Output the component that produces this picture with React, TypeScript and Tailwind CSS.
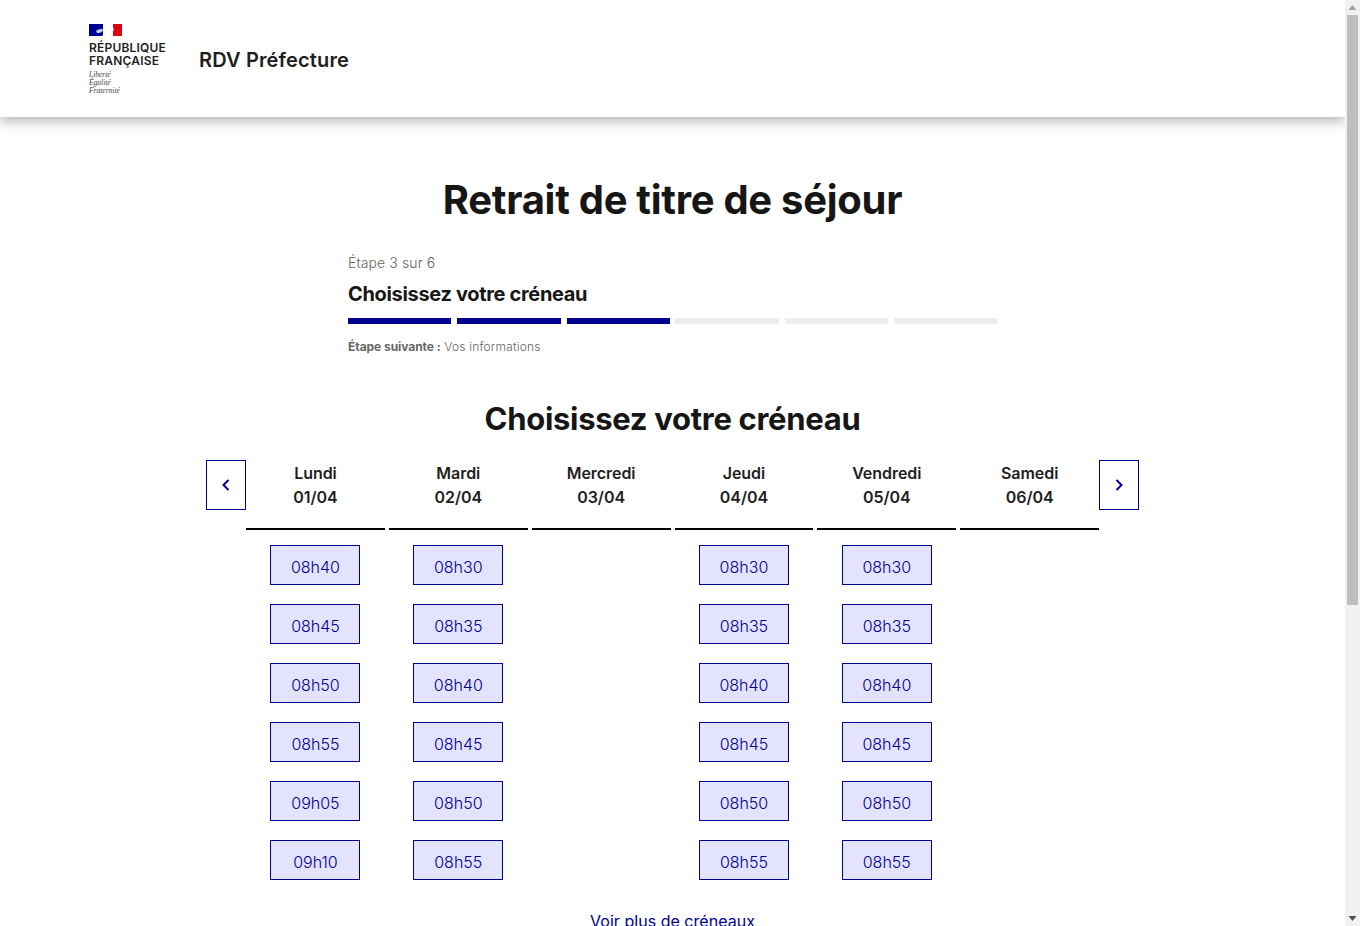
import React from "react";

const font = { fontFamily: '"Inter", "Noto Sans", sans-serif' };

const days = [
  { name: "Lundi", date: "01/04", slots: ["08h40", "08h45", "08h50", "08h55", "09h05", "09h10"] },
  { name: "Mardi", date: "02/04", slots: ["08h30", "08h35", "08h40", "08h45", "08h50", "08h55"] },
  { name: "Mercredi", date: "03/04", slots: [] as string[] },
  { name: "Jeudi", date: "04/04", slots: ["08h30", "08h35", "08h40", "08h45", "08h50", "08h55"] },
  { name: "Vendredi", date: "05/04", slots: ["08h30", "08h35", "08h40", "08h45", "08h50", "08h55"] },
  { name: "Samedi", date: "06/04", slots: [] as string[] },
];

const bars = [
  "w-[103px] bg-[#000091]",
  "w-[104px] ml-[6px] bg-[#000091]",
  "w-[103px] ml-[6px] bg-[#000091]",
  "w-[104px] ml-[5px] bg-[#eeeeee]",
  "w-[103px] ml-[6px] bg-[#eeeeee]",
  "w-[103px] ml-[6px] bg-[#eeeeee]",
];

function NavButton({ dir }: { dir: "left" | "right" }) {
  return (
    <button className="w-10 h-[50px] shrink-0 border border-[#000091] flex items-center justify-center bg-white">
      <svg width="10" height="14" viewBox="0 0 10 14" fill="none">
        <path
          d={dir === "left" ? "M7.5 2 L2.5 7 L7.5 12" : "M2.5 2 L7.5 7 L2.5 12"}
          stroke="#000091"
          strokeWidth="2"
        />
      </svg>
    </button>
  );
}

function Scrollbar() {
  return (
    <div className="w-[15px] shrink-0 h-full bg-[#f1f1f1] flex flex-col items-center">
      <svg width="15" height="15" viewBox="0 0 15 15" className="shrink-0">
        <path d="M7.5 5 L11.5 10 L3.5 10 Z" fill="#a3a3a3" />
      </svg>
      <div className="w-[11px] h-[590px] bg-[#bebebe]" />
      <div className="flex-1" />
      <svg width="15" height="15" viewBox="0 0 15 15" className="shrink-0">
        <path d="M3.5 5 L11.5 5 L7.5 10 Z" fill="#505050" />
      </svg>
    </div>
  );
}

export default function App() {
  return (
    <div className="flex h-[926px] w-full overflow-hidden bg-white text-[#161616]" style={font}>
      <div className="flex-1 min-w-0 h-full overflow-hidden">
        <header className="relative h-[117px] bg-white flex items-center pl-[89px] shadow-[0_4px_12px_rgba(0,0,18,0.3)]">
          <div className="w-[110px] h-full flex flex-col pt-[24px]">
            <svg width="33" height="12" viewBox="0 0 33 12" className="shrink-0">
              <rect width="14" height="12" fill="#000091" />
              <rect x="14" width="10" height="12" fill="#ffffff" />
              <rect x="24" width="9" height="12" fill="#e1000f" />
              <path d="M17 0 L22 0 C25 2 24 5 25 6 L24 7 C24 9 23 10 22 10 L24 12 L13 12 C15 10 16 8 15 6 L13 7 L15 4 C15 2 16 1 17 0 Z" fill="#ffffff" />
              <path d="M7 7 C9 5 12 5 14 5 L13 8 L10 9 L8 9 Z" fill="#c9c9e8" />
            </svg>
            <div className="mt-[5px] text-[12px] leading-[13px] font-semibold tracking-[0.2px] text-[#1e1e1e]">
              RÉPUBLIQUE
              <br />
              FRANÇAISE
            </div>
            <div
              className="mt-[4px] text-[7.5px] leading-[8px] italic text-[#444444]"
              style={{ fontFamily: '"Liberation Serif", serif' }}
            >
              Liberté
              <br />
              Égalité
              <br />
              Fraternité
            </div>
          </div>
          <div className="text-[20px] leading-[28px] pt-[2px] font-semibold text-[#1e1e1e] tracking-[0.15px]">RDV Préfecture</div>
        </header>

        <main className="flex flex-col items-center">
          <h1 className="mt-[56px] text-[40px] leading-[54px] font-bold text-center tracking-[-0.28px]">
            Retrait de titre de séjour
          </h1>

          <section className="w-[649px] mt-[23px]">
            <p className="text-[14px] leading-[24px] font-light text-[#666666] tracking-[0.1px] translate-y-[1px]">Étape 3 sur 6</p>
            <h2 className="mt-[6px] text-[20px] leading-[28px] font-bold tracking-[-0.33px]">Choisissez votre créneau</h2>
            <div className="mt-[10px] flex h-[6px]">
              {bars.map((b, i) => (
                <div key={i} className={b} />
              ))}
            </div>
            <p className="mt-[13px] text-[12px] leading-[20px] text-[#666666] font-light tracking-[0.2px]">
              <span className="font-bold tracking-[-0.05px]">Étape suivante :</span> Vos informations
            </p>
          </section>

          <h2 className="mt-[42px] text-[31px] leading-[40px] font-bold text-center tracking-[-0.3px]">
            Choisissez votre créneau
          </h2>

          <div className="mt-[21px] w-[933px] ml-[0.1px] flex items-start">
            <NavButton dir="left" />
            <div className="flex-1 grid grid-cols-6 gap-x-[4px]">
              {days.map((d) => (
                <div key={d.name} className="flex flex-col items-center">
                  <div className="w-full h-[70px] border-b-2 border-black text-center text-[16px] leading-[24px] font-semibold pt-[1px] text-[#1e1e1e] tracking-[-0.05px]">
                    {d.name}
                    <br />
                    {d.date}
                  </div>
                  <div className="flex flex-col gap-[19px] mt-[15px]">
                    {d.slots.map((s) => (
                      <button
                        key={s}
                        className="w-[90px] h-[40px] border border-[#000091] bg-[#e3e3fd] text-[#000091] text-[16px] font-light pt-[3px]"
                      >
                        {s}
                      </button>
                    ))}
                  </div>
                </div>
              ))}
            </div>
            <NavButton dir="right" />
          </div>

          <a className="mt-[29px] text-[16px] leading-[24px] text-[#000091] underline underline-offset-[6px] tracking-[0.03px]">
            Voir plus de créneaux
          </a>
        </main>
      </div>
      <Scrollbar />
    </div>
  );
}
